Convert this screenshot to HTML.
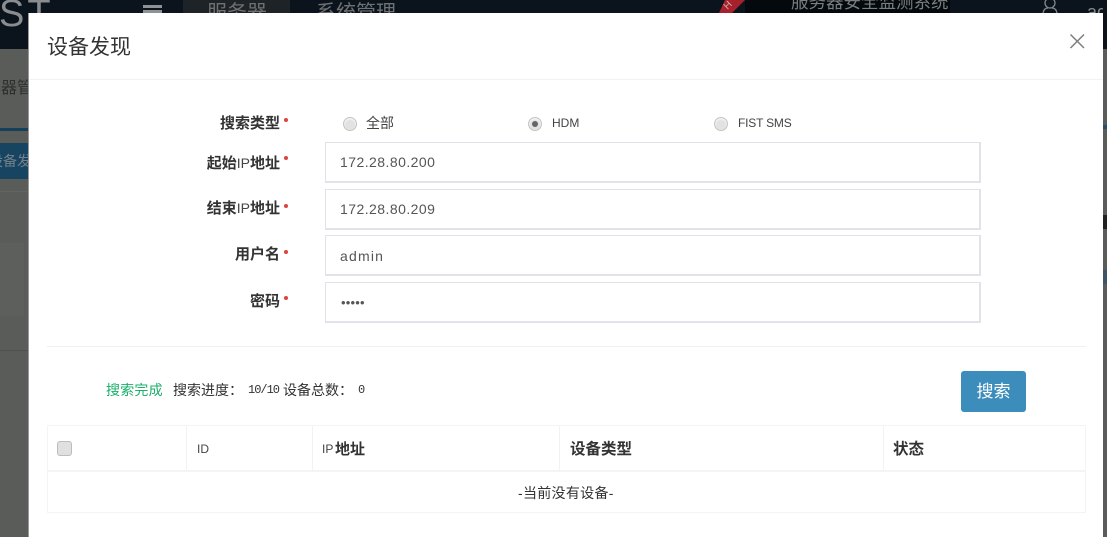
<!DOCTYPE html>
<html lang="zh">
<head>
<meta charset="utf-8">
<title>设备发现</title>
<style>
html,body{margin:0;padding:0;width:1107px;height:537px;overflow:hidden;background:#5a5c59}
body{position:relative;font-family:"Liberation Sans","Noto Sans CJK SC",sans-serif;color:#333}
.a{position:absolute;white-space:nowrap}
.lab{font-size:15px;font-weight:bold;line-height:20px;text-align:right;right:827px;color:#333}
.lab i{font-weight:normal;font-style:normal;font-size:14px;color:#444}
.star{position:absolute;left:284px;width:4px;height:4px;border-radius:50%;background:#e0423c}
.inp{position:absolute;left:325px;height:38px;width:639px;border:1px solid #e2e2ea;border-width:1px 2px 2px 1px;line-height:39px;font-size:14px;color:#555;padding-left:14px;letter-spacing:.45px}
.rad{position:absolute;width:12px;height:12px;border-radius:50%;background:#e2e2e2;border:1px solid #c4c4c4;box-shadow:inset 0 1px 2px #fff}
.vl{position:absolute;top:426px;width:1px;height:45px;background:#f2f2f2}
</style>
</head>
<body>
<!-- dark header -->
<div class="a" style="left:0;top:0;width:1107px;height:49px;background:#0b141c"></div>
<div class="a" style="left:-1px;top:-5px;font-size:38px;color:#8a8d8f;letter-spacing:3px;line-height:38px">ST</div>
<div class="a" style="left:143px;top:5px;width:19px;height:3px;background:#8f9294"></div>
<div class="a" style="left:143px;top:10px;width:19px;height:3px;background:#8f9294"></div>
<div class="a" style="left:183px;top:0;width:107px;height:13px;background:#1e2327"></div>
<div class="a" style="left:207px;top:1px;font-size:20px;line-height:24px;color:#6f7274">服务器</div>
<div class="a" style="left:316px;top:1px;font-size:20px;line-height:24px;color:#6f7274">系统管理</div>
<div class="a" style="left:745px;top:0;width:205px;height:13px;background:#03090c"></div>
<div class="a" style="left:719px;top:0;width:26px;height:13px;background:#a8202c;clip-path:polygon(23% 0,100% 0,50% 100%,0 100%)"></div>
<div class="a" style="left:725px;top:1px;font-size:10px;line-height:10px;color:#c9b0b2;transform:rotate(-45deg)">H</div>
<div class="a" style="left:791px;top:-8px;font-size:17.5px;line-height:20px;color:#7b7e80">服务器安全监测系统</div>
<svg class="a" style="left:1040px;top:0" width="20" height="13"><circle cx="10" cy="3" r="5" fill="none" stroke="#85888a" stroke-width="1.3"/><path d="M3 13 Q4 8 8 8 M17 13 Q16 8 12 8" fill="none" stroke="#85888a" stroke-width="1.3"/></svg>
<div class="a" style="left:1087px;top:2px;font-size:18px;line-height:20px;color:#85888a">ad</div>

<!-- dimmed page left -->
<div class="a" style="left:1px;top:79px;font-size:16px;line-height:20px;color:#2e2f2e">器管</div>
<div class="a" style="left:0;top:128px;width:29px;height:3px;background:#14405c"></div>
<div class="a" style="left:0;top:143px;width:29px;height:36px;background:#174461"></div>
<div class="a" style="left:-11px;top:151px;font-size:14px;line-height:20px;color:#74808a;width:40px;overflow:hidden">设备发</div>
<div class="a" style="left:0;top:191px;width:29px;height:1px;background:#626462"></div>
<div class="a" style="left:0;top:243px;width:24px;height:73px;background:#5d5f5c"></div>
<div class="a" style="left:0;top:350px;width:29px;height:1px;background:#4f514f"></div>
<div class="a" style="left:1103px;top:0;width:4px;height:48px;background:#0b141c"></div>
<div class="a" style="left:1103px;top:125px;width:4px;height:4px;background:#23506c"></div>
<div class="a" style="left:1103px;top:215px;width:4px;height:14px;background:#222"></div>
<div class="a" style="left:1103px;top:270px;width:4px;height:14px;background:#3d5564"></div>

<!-- modal -->
<div class="a" style="left:28px;top:13px;width:1px;height:524px;background:#999"></div>
<div class="a" style="left:29px;top:13px;width:1074px;height:524px;background:#fff"></div>

<div class="a" style="left:48px;top:34px;font-size:21px;line-height:27px;color:#333;margin-left:-1px">设备发现</div>
<svg class="a" style="left:1069px;top:33px" width="16" height="16"><path d="M1.5 1.5 L15 15 M15 1.5 L1.5 15" stroke="#7d7d7d" stroke-width="1.5" fill="none"/></svg>
<div class="a" style="left:29px;top:79px;width:1074px;height:1px;background:#f3f3f3"></div>

<!-- form -->
<div class="a lab" style="top:114px">搜索类型</div><div class="star" style="top:118px"></div>
<div class="a lab" style="top:153px">起始<i>IP</i>地址</div><div class="star" style="top:156px"></div>
<div class="a lab" style="top:198px">结束<i>IP</i>地址</div><div class="star" style="top:204px"></div>
<div class="a lab" style="top:245px">用户名</div><div class="star" style="top:250px"></div>
<div class="a lab" style="top:292px">密码</div><div class="star" style="top:296px"></div>

<div class="rad" style="left:343px;top:117px"></div>
<div class="a" style="left:366px;top:113px;font-size:14px;line-height:20px;color:#444">全部</div>
<div class="rad" style="left:528px;top:117px"></div>
<div class="a" style="left:532px;top:121px;width:6px;height:6px;border-radius:50%;background:#666"></div>
<div class="a" style="left:552px;top:113px;font-size:12px;line-height:20px;color:#444">HDM</div>
<div class="rad" style="left:714px;top:117px"></div>
<div class="a" style="left:738px;top:113px;font-size:12px;line-height:20px;color:#444;letter-spacing:-.2px">FIST SMS</div>

<div class="inp" style="top:142px">172.28.80.200</div>
<div class="inp" style="top:189px">172.28.80.209</div>
<div class="inp" style="top:235px;letter-spacing:1.2px;line-height:40px">admin</div>
<div class="inp" style="top:282px"></div>
<div class="a" style="left:341px;top:293px;font-size:13px;letter-spacing:.2px;line-height:20px;color:#555">•••••</div>

<div class="a" style="left:47px;top:346px;width:1039px;height:1px;background:#f0f0f0"></div>

<!-- status -->
<div class="a" style="left:106px;top:380px;font-size:14px;line-height:20px;color:#1aaf6a;letter-spacing:.2px">搜索完成</div>
<div class="a" style="left:173px;top:380px;font-size:14px;line-height:20px;color:#333;width:70px;overflow:hidden">搜索进度：</div>
<div class="a" style="left:248px;top:380px;font-family:'Liberation Mono',monospace;font-size:12px;line-height:20px;color:#333;letter-spacing:-1px">10/10</div>
<div class="a" style="left:283px;top:380px;font-size:14px;line-height:20px;color:#333">设备总数：</div>
<div class="a" style="left:358px;top:380px;font-family:'Liberation Mono',monospace;font-size:12px;line-height:20px;color:#333">0</div>

<div class="a" style="left:961px;top:371px;width:65px;height:41px;background:#3c8dbc;border-radius:3px;color:#fff;font-size:17px;line-height:42px;text-align:center">搜索</div>

<!-- table -->
<div class="a" style="left:47px;top:425px;width:1037px;height:86px;border:1px solid #f4f4f4"></div>
<div class="a" style="left:47px;top:470px;width:1038px;height:2px;background:#f4f4f4"></div>
<div class="vl" style="left:186px"></div>
<div class="vl" style="left:312px"></div>
<div class="vl" style="left:559px"></div>
<div class="vl" style="left:883px"></div>
<div class="a" style="left:57px;top:441px;width:13px;height:13px;background:#e0e0e0;border:1px solid #bdbdbd;border-radius:3px"></div>
<div class="a" style="left:197px;top:439px;font-size:12px;line-height:20px;color:#444">ID</div>
<div class="a" style="left:322px;top:439px;font-size:12px;line-height:20px;color:#444">IP</div>
<div class="a" style="left:335px;top:440px;font-size:15px;font-weight:bold;line-height:20px;color:#333">地址</div>
<div class="a" style="left:570px;top:440px;font-size:15.5px;font-weight:bold;line-height:20px;color:#333">设备类型</div>
<div class="a" style="left:893px;top:440px;font-size:15.5px;font-weight:bold;line-height:20px;color:#333">状态</div>
<div class="a" style="left:518px;top:483px;font-size:14px;line-height:20px;color:#333;letter-spacing:.3px">-当前没有设备-</div>
</body>
</html>
